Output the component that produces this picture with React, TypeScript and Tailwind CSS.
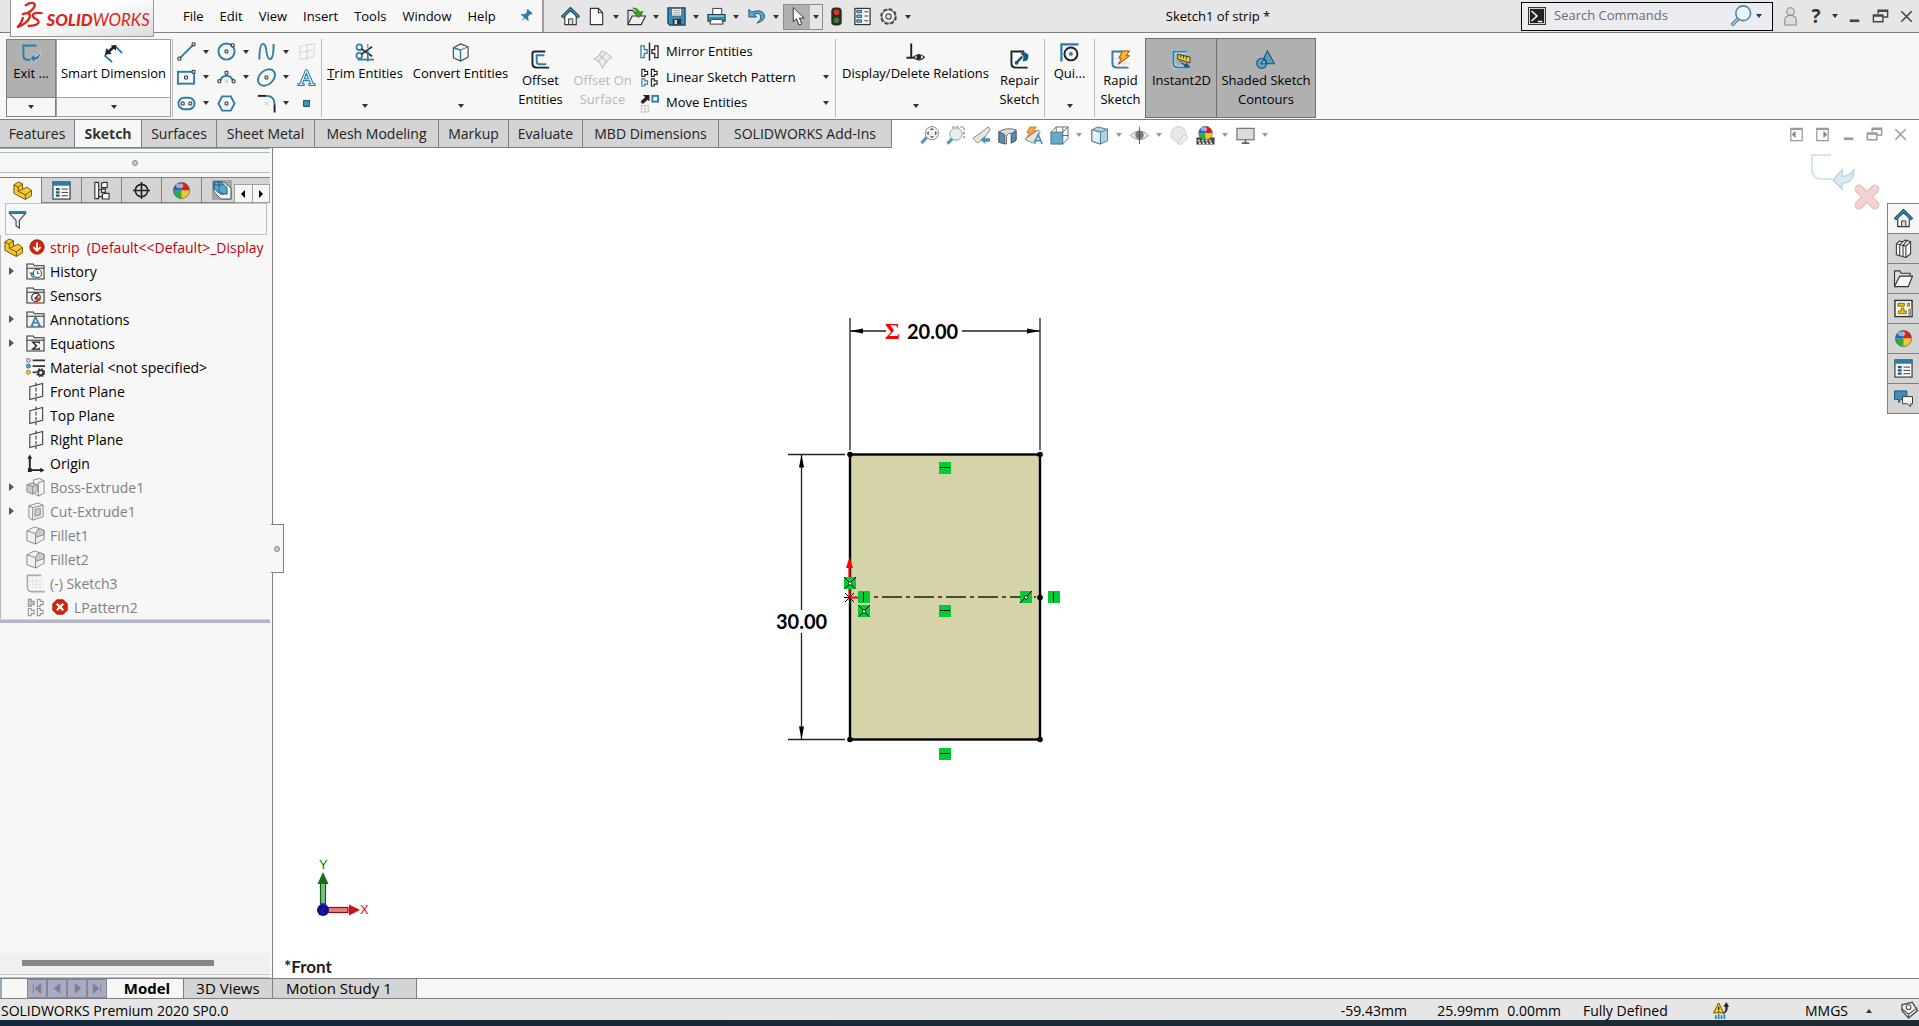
import React from 'react';
import clsx from 'clsx';

const BLUE = '#2b7ea6';
const DARK = '#333333';

const ball = (
  <>
    <path d="M10 10V1.500A8.500 8.500 0 0 1 18.500 10z" fill="#d92020" />
    <path d="M10 10H18.500A8.500 8.500 0 0 1 10 18.500z" fill="#f0c830" />
    <path d="M10 10V18.500A8.500 8.500 0 0 1 1.500 10z" fill="#2fae3a" />
    <path d="M10 10H1.500A8.500 8.500 0 0 1 10 1.500z" fill="#2560c8" />
    <circle cx="10" cy="10" r="8.500" fill="none" stroke="#444" strokeOpacity="0.600" />
    <ellipse cx="8" cy="5" rx="4" ry="2.500" fill="#fff" opacity="0.500" />
  </>
);

const folder = <path d="M1 18V2H7.500L9 4H19V18zM1 6.500H19" fill="#f2f2f2" stroke={DARK} strokeWidth="1.100" />;

const part = (
  <g stroke="#6b5200" strokeWidth="1" strokeLinejoin="round">
    <path d="M1 4L5.500 1L10 3V8.500L15 6.500L19.500 10V15.500L13 19.500L1 13z" fill="#f5c932" />
    <path d="M1 4L5.500 6.500V11L13 14.500V19.500M5.500 6.500L10 3M13 14.500L19.500 10M5.500 11L10 8.500" fill="none" />
  </g>
);

const table = (
  <>
    <rect x="1" y="1" width="18" height="18" fill="#fff" stroke={DARK} strokeWidth="1.200" />
    <rect x="0.500" y="0.500" width="19" height="4.500" fill={BLUE} />
    <path d="M4 8.500H8M4 12H8M4 15.500H8" stroke="#15597c" strokeWidth="2.400" />
    <path d="M10 8.500H17M10 12H17M10 15.500H17" stroke={DARK} />
  </>
);

const home = (
  <>
    <path d="M4 9V18.500H16V9L10 4z" fill="#fff" stroke={DARK} strokeWidth="1.200" />
    <path d="M8 18V12.500H12.500V18" fill="#ddd" stroke={DARK} />
    <path d="M1 11L10 2L19 11" fill="none" stroke="#0f4a68" strokeWidth="3.400" />
    <path d="M1.500 10.500L10 2.200L18.500 10.500" fill="none" stroke="#3f97bd" strokeWidth="1.300" />
  </>
);

const fillet = (
  <g stroke="#888" strokeLinejoin="round">
    <path d="M1 5L9 1L19 4.500V14L10 19L1 15.500z" fill="#f1f1f1" />
    <path d="M1 5L10 8V19" fill="none" />
    <path d="M10 8Q12 3 15 3L19 5V9L10 12z" fill="#ccc" />
  </g>
);

const restore = (color: string) => (
  <path d="M7.500 7V3.500H17.500V10.500H13M2.500 8.500H12.500V15.500H2.500zM7 4.500H18M2 9.500H13" fill="none" stroke={color} strokeWidth="1.500" />
);

const icons: Record<string, React.ReactNode> = {
  home,
  ball,
  part,
  table,
  fillet,
  pin: (
    <g transform="rotate(40 10 10)" fill={BLUE}>
      <path d="M6 2H14V4L12.500 5V9L16 12V13H4V12L7.500 9V5L6 4z" />
      <path d="M9.300 13H10.700L10 19z" />
    </g>
  ),
  newDoc: <path d="M3.500 1.500H12L16.500 6V18.500H3.500zM12 1.500V6H16.500" fill="#fafafa" stroke={DARK} strokeWidth="1.200" />,
  open: (
    <>
      <path d="M1 18V3.500H6L8 6H15V9" fill="#ddd" stroke={DARK} strokeWidth="1.200" />
      <path d="M1 18.500L5.500 9.500H19.500L15 18.500z" fill="#eee" stroke={DARK} strokeWidth="1.200" />
      <path d="M6 1Q12 1 13 5H17L12 11.500L7.500 6H10Q10 3 6 1z" fill="#3fa015" stroke="#1f6a08" strokeWidth="0.600" />
    </>
  ),
  save: (
    <>
      <path d="M1 1H19V19H3L1 17z" fill="#3b8fb8" stroke="#0f3f5c" strokeWidth="1.300" />
      <rect x="5" y="1.500" width="10.500" height="8" fill="#fafafa" stroke="#555" strokeWidth="0.800" />
      <path d="M6.500 3.500H14M6.500 5.500H14M6.500 7.500H14" stroke="#888" strokeWidth="0.800" />
      <rect x="6" y="12.500" width="9" height="6" fill="#333" />
      <rect x="8" y="13.500" width="2.500" height="4.500" fill="#ddd" />
    </>
  ),
  print: (
    <>
      <path d="M6 8V1.500H15.500V8" fill="#fff" stroke={DARK} />
      <path d="M1 8H19V15H1z" fill="#3b8fb8" stroke="#0f3f5c" strokeWidth="1.200" />
      <path d="M2 9.500H18" stroke="#9bd0e6" strokeWidth="1.500" />
      <path d="M4.500 13H15.500L17 18H3z" fill="#fff" stroke={DARK} />
    </>
  ),
  undo: <path d="M2 2.500V10.500H10L7.500 7.500Q13 5.500 14.500 9.500Q15.500 13 10.500 17Q19 14.500 18.500 8.500Q15.500 1.500 5 5.300z" fill="#5ba8cc" stroke="#15597c" />,
  cursor: <path d="M5.500 0.500V15.500L9 12.500L11.500 19L14.500 17.800L12 11.700H17z" fill="#fff" stroke="#333" />,
  traffic: (
    <>
      <rect x="4.500" y="0.500" width="11" height="19" rx="4" fill="#2b2b2b" />
      <circle cx="10" cy="5.500" r="3" fill="#e03418" />
      <circle cx="10" cy="14" r="3" fill="#2f8a20" />
    </>
  ),
  options: (
    <>
      <rect x="2" y="1.500" width="16" height="17" fill="#f5f5f5" stroke={DARK} strokeWidth="1.300" />
      <path d="M12 5H16M12 9.500H16M12 14.500H16" stroke={DARK} />
      <path d="M4 3.500H9V6H4zM4 8.500H9V11H4zM4 13.500H9V16H4z" fill="#7fc0dc" stroke="#15597c" />
    </>
  ),
  gear: (
    <>
      <circle cx="10" cy="10" r="7.500" fill="none" stroke="#444" strokeWidth="2.500" strokeDasharray="3.900 1.990" />
      <circle cx="10" cy="10" r="7" fill="#eee" stroke="#444" />
      <circle cx="10" cy="10" r="2.800" fill="#e6e6e6" stroke="#444" strokeWidth="1.200" />
    </>
  ),
  prompt: (
    <>
      <rect x="0.500" y="0.500" width="19" height="19" fill="#fff" stroke="#222" />
      <rect x="2" y="2" width="16" height="16" fill="#222" />
      <path d="M4 4.500L10 10L4 15.500M11 16H16" fill="none" stroke="#fff" strokeWidth="1.700" />
    </>
  ),
  search: (
    <>
      <path d="M8 12L1.500 18.500" stroke="#4c7fa0" strokeWidth="3.200" />
      <path d="M8 12L2 18" stroke="#cfe6f2" strokeWidth="1" />
      <circle cx="12" cy="7.500" r="6.700" fill="#eef6fa" stroke="#4f87aa" strokeWidth="1.500" />
    </>
  ),
  user: (
    <g fill="#ddd" stroke="#888" strokeWidth="1.100">
      <path d="M4 19V13.500Q4 9 10 9Q16 9 16 13.500V19z" />
      <circle cx="10" cy="4.800" r="4" />
    </g>
  ),
  minimize: <path d="M5 14.500H15" stroke="#444" strokeWidth="2.800" />,
  restore: restore('#444'),
  close: <path d="M4.500 4.500L15.500 15.500M15.500 4.500L4.500 15.500" stroke="#444" strokeWidth="1.700" />,
  minimizeLight: <path d="M5 14.500H15" stroke="#999" strokeWidth="2.800" />,
  restoreLight: restore('#999'),
  closeLight: <path d="M4.500 4.500L15.500 15.500M15.500 4.500L4.500 15.500" stroke="#999" strokeWidth="1.500" />,
  paneLeft: (
    <>
      <path d="M4 3.500H16V16.500H4zM4 4.500H16" fill="none" stroke="#999" strokeWidth="1.300" />
      <path d="M9 6V14L5 10z" fill="#888" />
    </>
  ),
  paneRight: (
    <>
      <path d="M4 3.500H16V16.500H4zM4 4.500H16" fill="none" stroke="#999" strokeWidth="1.300" />
      <path d="M11 6V14L15 10z" fill="#888" />
    </>
  ),
  exitSketch: (
    <>
      <path d="M15.500 1.500H1.500V12Q1.500 16.500 6 16.500H9" fill="none" stroke={BLUE} strokeWidth="2" />
      <path d="M19.500 8Q19.500 17 13.500 17V20L8.500 15L13.500 10V13.500Q17 13 19.500 8z" fill={BLUE} stroke="#e8f2f8" strokeWidth="0.600" />
    </>
  ),
  smartDim: (
    <>
      <path d="M3 10L1 12.500L8.500 19M11.500 2L19 9.500" fill="none" stroke={BLUE} strokeWidth="2" />
      <path d="M1 11L2.500 4.500L4.500 6.500L8.500 3L7 1.500L13 1L12.500 7L10.500 5L6.500 8.500L8 10.500z" fill="#222" />
    </>
  ),
  line: (
    <>
      <path d="M3 17L17 3" stroke={BLUE} strokeWidth="2" />
      <path d="M1 16h3v3h-3zM16 1h3v3h-3z" fill="#fff" stroke="#222" />
    </>
  ),
  circle: (
    <>
      <circle cx="10" cy="10" r="8.500" fill="none" stroke={BLUE} strokeWidth="2" />
      <path d="M8.500 8.500h3v3h-3zM15 2h3v3h-3z" fill="#fff" stroke="#222" />
    </>
  ),
  spline: <path d="M2.500 18.500Q2.500 2 6.500 2Q9 2 10 10Q11 18 13.500 18Q17.500 18 17.500 2" fill="none" stroke={BLUE} strokeWidth="2" />,
  plane: <path d="M3 5L18 1.500V15L3 18.500zM10.500 2V19M3 11.500L18 8" fill="none" stroke="#c4c4c4" strokeDasharray="2 1" />,
  rectangle: (
    <>
      <rect x="1" y="4" width="17" height="12.500" fill="none" stroke={BLUE} strokeWidth="2" />
      <path d="M8 8.500h3v3h-3zM16 2.500h3v3h-3z" fill="#fff" stroke="#222" />
    </>
  ),
  arc: (
    <>
      <path d="M3 14A7.500 9 0 0 1 17 14" fill="none" stroke={BLUE} strokeWidth="2" />
      <path d="M1 12.500h3v3h-3zM16 12.500h3v3h-3zM8.500 3.500h3v3h-3z" fill="#fff" stroke="#222" />
      <path d="M8 12l4 4M12 12l-4 4" stroke="#bbb" />
    </>
  ),
  ellipse: (
    <>
      <ellipse cx="10" cy="10" rx="10" ry="7.300" transform="rotate(-42 10 10)" fill="none" stroke={BLUE} strokeWidth="2" />
      <path d="M8.500 8.500h3v3h-3z" fill="#fff" stroke="#222" />
    </>
  ),
  text: (
    <path
      d="M1 18.500V16.500H2.800L9 2H11L17.200 16.500H19V18.500H12.500V16.500H14.200L12.900 13.300H7L5.700 16.500H7.500V18.500zM7.700 11.300H12L9.900 5.800z"
      fill="#dcecf4"
      stroke={BLUE}
      strokeWidth="1.100"
    />
  ),
  slot: (
    <>
      <rect x="1.500" y="4" width="17" height="12" rx="6" fill="none" stroke={BLUE} strokeWidth="2" />
      <path d="M4.500 8.500h3v3h-3zM12.500 8.500h3v3h-3z" fill="#fff" stroke="#222" />
    </>
  ),
  polygon: (
    <>
      <path d="M5.500 2.500H14.500L18.500 10L14.500 17.500H5.500L1.500 10z" fill="none" stroke={BLUE} strokeWidth="2" />
      <path d="M8.500 8.500h3v3h-3z" fill="#fff" stroke="#222" />
    </>
  ),
  filletSketch: (
    <>
      <path d="M1 2H10" stroke="#222" strokeWidth="2" />
      <path d="M10 2Q18.500 2 18.500 11" fill="none" stroke={BLUE} strokeWidth="2" />
      <path d="M18.500 11V19.500" stroke="#222" strokeWidth="2" />
      <path d="M8 8l4 4M12 8l-4 4" stroke="#bbb" />
    </>
  ),
  point: <rect x="7" y="7" width="6" height="6" fill="#3f97bd" stroke="#0f3f5c" />,
  trim: (
    <>
      <circle cx="4.500" cy="4.500" r="3" fill="none" stroke={BLUE} strokeWidth="1.800" />
      <circle cx="4.500" cy="13.500" r="3" fill="none" stroke={BLUE} strokeWidth="1.800" />
      <path d="M6.500 6L18 14M6.500 12L18 4" stroke="#333" strokeWidth="1.800" />
      <path d="M13.500 8V19.500M3 17.500H20" stroke={BLUE} strokeWidth="1.800" />
      <path d="M13.500 1V5" stroke="#555" />
    </>
  ),
  convert: (
    <>
      <path d="M2.500 5L10 1L18 4V15L10 19L2.500 15.500z" fill="#f4f4f4" stroke="#444" strokeWidth="1.200" />
      <path d="M10 7.500V19M10 7.500L18 4" stroke="#666" fill="none" />
      <path d="M2.500 5L10 7.500V18.500" fill="none" stroke={BLUE} strokeWidth="1.500" />
    </>
  ),
  offset: (
    <>
      <path d="M15 1.500H4Q1.500 1.500 1.500 4V14Q1.500 18.500 6 18.500H19" fill="none" stroke="#222" strokeWidth="2" />
      <path d="M14 5.500H6V12Q6 15 9 15H16" fill="none" stroke={BLUE} strokeWidth="2" />
    </>
  ),
  offsetSurface: <path d="M1 9.500Q7 7 9 1Q15 2.500 19.500 8Q15 10 10 19Q8 12.500 1 9.500zM5 12Q10 9 13 3.500M7.500 6L14 12" fill="#ededed" stroke="#c2c2c2" strokeWidth="1.200" />,
  mirror: (
    <>
      <path d="M1 4H4.500V8H7.500V12H4.500V16.500H1z" fill="none" stroke={BLUE} strokeWidth="1.300" />
      <path d="M19 4H15.500V8H12.500V12H15.500V16.500H19z" fill="none" stroke="#222" strokeWidth="1.300" />
      <path d="M10 0.500V19.500" stroke="#222" strokeWidth="1.500" />
    </>
  ),
  linear: (
    <g fill="none" strokeWidth="1.200">
      <path d="M2 1.500h3v2h3v3.500h-3v2h-3zM12 1.500h3v2h3v3.500h-3v2h-3zM12 11.500h3v2h3v3.500h-3v2h-3z" stroke="#222" />
      <path d="M2 11.500h3v2h3v3.500h-3v2h-3z" stroke={BLUE} />
    </g>
  ),
  move: (
    <>
      <path d="M3 1H10V8L8 6L3 10.500L0.500 8L5.500 3.500z" fill="#222" />
      <rect x="13" y="2" width="6" height="6" fill="#fff" stroke={BLUE} strokeWidth="2" />
      <path d="M1.500 12.500H9V19H1.500zM5.500 12V19" fill="none" stroke="#bbb" strokeDasharray="2 1" strokeWidth="1.300" />
    </>
  ),
  relations: (
    <>
      <path d="M5.500 0.500V15M0.500 15.500H9" stroke="#222" strokeWidth="2" />
      <path d="M8 15Q13.500 9.500 19.500 15Q13.500 20.500 8 15z" fill="#fff" stroke="#333" strokeWidth="1.200" />
      <circle cx="13.500" cy="14.800" r="2.500" fill="#222" />
    </>
  ),
  repair: (
    <>
      <path d="M15 1.500H1.500V14Q1.500 18.500 6 18.500H18.500" fill="none" stroke="#222" strokeWidth="2" />
      <path d="M6 14L13 7M12 4.500Q15 2.500 17.500 5L15 6L15.500 8L18 7.500Q18 11 13.500 10.500" fill="none" stroke="#15597c" strokeWidth="2.600" />
      <circle cx="7" cy="13.500" r="2" fill="#15597c" />
    </>
  ),
  quick: (
    <>
      <path d="M1.500 19.500V1.500H19.500" fill="none" stroke={BLUE} strokeWidth="2.400" />
      <circle cx="11.500" cy="11.500" r="6.800" fill="none" stroke="#222" strokeWidth="2" />
      <circle cx="11.500" cy="11.500" r="2" fill={BLUE} />
    </>
  ),
  rapid: (
    <>
      <path d="M8 1V20M14 1V20M1 9H20M1 14H20" stroke="#ddd" />
      <path d="M12 1.500H1.500V14Q1.500 18.500 6 18.500H18.500" fill="none" stroke={BLUE} strokeWidth="2" />
      <path d="M12 1H19.500L16 6H19.500L8 15L11 8.500H8.500z" fill="#f9b81f" stroke="#a33c10" />
    </>
  ),
  instant: (
    <>
      <path d="M16 1.500H1.500V14Q1.500 18.500 6 18.500H19" fill="none" stroke="#e8f2f8" strokeWidth="3.600" />
      <path d="M16 1.500H1.500V14Q1.500 18.500 6 18.500H19" fill="none" stroke={BLUE} strokeWidth="2.200" />
      <path d="M6 4.500L19 7.500V13.500L6 9.500z" fill="#f7cc34" stroke="#333" />
      <path d="M9 5.500V8M12 6V9M15 7V10" stroke="#333" />
      <path d="M6 10.500L14 15L15 13L19 18L12.500 18L13 16.500z" fill="#15597c" />
    </>
  ),
  shaded: (
    <g stroke="#15597c" strokeWidth="1.200">
      <path d="M12 1L19.500 14.500H5.500z" fill="#5a9fc0" />
      <circle cx="6" cy="14" r="5.300" fill="#5a9fc0" fillOpacity="0.900" />
      <path d="M5.500 14.500H11L8.500 9.500z" fill="#9ccbe0" />
    </g>
  ),
  zoomFit: (
    <>
      <path d="M7 12L1.500 18" stroke="#5b94b4" strokeWidth="3.200" />
      <circle cx="12.500" cy="7.500" r="7" fill="#f0f0f0" stroke="#888" />
      <path d="M12.500 2l2.200 2.200h-4.400zM12.500 13l2.200-2.200h-4.400zM7 7.500l2.200-2.200v4.400zM18 7.500l-2.200-2.200v4.400z" fill="#555" />
    </>
  ),
  zoomArea: (
    <>
      <path d="M6 1H19V13" fill="none" stroke="#777" strokeDasharray="3 1.500" strokeWidth="1.200" />
      <path d="M7 13L1.500 18.500" stroke="#5b94b4" strokeWidth="3.200" />
      <circle cx="10.500" cy="8.500" r="6.500" fill="#e9eef0" stroke="#999" />
    </>
  ),
  prevView: (
    <>
      <path d="M1 13L12 5L17 1L19 4L15 10L6 18z" fill="#e3e3e3" stroke="#888" />
      <path d="M9 14.500L14 10.500V13H19V16.500H14V19z" fill="#4a93b8" />
    </>
  ),
  section: (
    <>
      <path d="M1 6Q9 1 19 4V15L14 18V8Q10 7 9 11V19L1 17z" fill="#dcdcdc" stroke="#666" />
      <path d="M1 6L7 9V19L1 17zM14 8L19 5V15L14 18z" fill="#4a93b8" stroke="#555" />
    </>
  ),
  viewStyle: (
    <>
      <path d="M1 14L9 8L15 4L17 7L9 18z" fill="#e3e3e3" stroke="#888" />
      <path d="M6 1H13L10 5H13L3 12L6 7H3z" fill="#f5a63a" stroke="#b86b28" strokeWidth="0.800" />
      <path d="M11 19L15 9L19 19M12.500 15.500H17.500" fill="none" stroke="#4a93b8" strokeWidth="1.800" />
    </>
  ),
  orientation: (
    <>
      <path d="M6.500 1H19V13M1 6.500L6.500 1M13.500 6.500L19 1M13.500 19L19 13M6.500 1V6.500M13.500 1V6M13.500 10H19" fill="none" stroke="#666" />
      <rect x="1" y="6.500" width="12.500" height="12.500" fill="#6ba9c7" stroke="#3a7390" />
    </>
  ),
  displayStyle: (
    <g stroke="#5a7482" strokeLinejoin="round">
      <path d="M2 4L8 1L18.500 3.500V15.500L11 19L2 16z" fill="#a9d4e6" />
      <path d="M2 4L11 6.500V19M11 6.500L18.500 3.500" fill="none" />
      <path d="M2 4L11 6.500V19L2 16z" fill="#e2f0f6" />
    </g>
  ),
  hideShow: (
    <>
      <path d="M0.500 10Q10 0 19.500 10Q10 19 0.500 10z" fill="#eaeaea" stroke="#999" />
      <circle cx="10" cy="9.500" r="4.500" fill="#777" />
      <path d="M10 1V19" stroke="#555" />
    </>
  ),
  appearance: (
    <>
      <circle cx="9" cy="8.500" r="8" fill="#e8e8e8" stroke="#d0d0d0" />
      <path d="M8 17L15 9L19 12L12 19H8z" fill="#ededed" stroke="#c4c4c4" />
    </>
  ),
  scene: (
    <>
      <path d="M0.500 12H19.500V19.500H0.500z" fill="#444" />
      <path d="M2 15.500H18M3 18H17" stroke="#eee" strokeWidth="1.800" strokeDasharray="2 2" />
      <g transform="translate(1.500 -1) scale(0.850)">{ball}</g>
    </>
  ),
  monitor: (
    <>
      <rect x="1" y="2.500" width="18" height="12" fill="#d8dcde" stroke="#777" strokeWidth="1.300" />
      <path d="M10 14V18M6 18H14" stroke="#666" strokeWidth="1.800" />
    </>
  ),
  config: (
    <g fill="#fafafa" stroke={DARK} strokeWidth="1.200">
      <path d="M5 2V16.500H12M5 9H12" fill="none" />
      <path d="M3 1.500h4v17h-4zM10 2.500L12 1.500H16V7H10zM10 8.500h4v3.500h-4zM11 14L13 13H18V19H11z" />
    </g>
  ),
  target: (
    <>
      <circle cx="10" cy="10" r="6.500" fill="none" stroke="#222" strokeWidth="1.700" />
      <path d="M10 1V19M1 10H19" stroke="#222" strokeWidth="1.700" />
    </>
  ),
  cam: (
    <>
      <rect width="20" height="20" fill="#a5a5a9" />
      <path d="M2 2H12L19 8V19H9L2 12z" fill="#f4f4f4" stroke="#555" />
      <path d="M2 2H9L15 7.500V14H8L2 8.500z" fill="#5ba8cc" stroke="#15597c" />
      <path d="M2 5H11M7 2V11L12 15" fill="none" stroke="#15597c" strokeWidth="0.800" />
    </>
  ),
  funnel: (
    <>
      <path d="M1.500 3.500H18.500L12 11V19L8.500 16.500V11z" fill="#f2f2f2" stroke="#444" strokeWidth="1.200" />
      <path d="M1 2.500H19" stroke={BLUE} strokeWidth="3" />
    </>
  ),
  errorDown: (
    <>
      <circle cx="10" cy="10" r="9" fill="#d92408" stroke="#7c1204" />
      <path d="M10 4.500V14M5.500 10L10 14.500L14.500 10" fill="none" stroke="#fff" strokeWidth="2.400" />
    </>
  ),
  errorCross: (
    <>
      <path d="M6 1H14L19 6V14L14 19H6L1 14V6z" fill="#d92408" stroke="#7c1204" />
      <path d="M6 6L14 14M14 6L6 14" stroke="#fff" strokeWidth="2.800" />
    </>
  ),
  history: (
    <>
      {folder}
      <circle cx="12" cy="12" r="4.300" fill="#fff" stroke="#333" />
      <path d="M12 9.500V12H14" fill="none" stroke="#333" />
      <path d="M3.500 11H9L6.500 14Q8 16.500 11 17Q6 18 5 13.500z" fill={BLUE} />
    </>
  ),
  sensors: (
    <>
      {folder}
      <circle cx="10.500" cy="12" r="4.500" fill="#fff" stroke="#333" strokeWidth="1.300" />
      <path d="M10.500 12L15 12A4.500 4.500 0 0 1 10.500 16.500z" fill="#e0401c" />
      <path d="M9 14L13 9.500" stroke="#222" strokeWidth="1.300" />
    </>
  ),
  annotations: (
    <>
      {folder}
      <path d="M6 16.500L10 7.500L14.500 16.500M7.500 13.500H13M5 16.500H8M12.500 16.500H16" fill="none" stroke={BLUE} strokeWidth="1.600" />
    </>
  ),
  equations: (
    <>
      {folder}
      <path d="M14 10V8.500H7L11 12.300L7 16H14V14.500" fill="none" stroke="#222" strokeWidth="1.400" />
    </>
  ),
  material: (
    <>
      <path d="M7 2.500H20M7 8.500H20M7 15H11" stroke="#333" strokeWidth="1.800" />
      <circle cx="2.500" cy="2.500" r="2.100" fill="#ddd" stroke="#555" strokeWidth="0.800" />
      <circle cx="2.500" cy="8.500" r="2.100" fill="#5ba8cc" stroke="#15597c" strokeWidth="0.800" />
      <circle cx="2.500" cy="15" r="2.100" fill="#f5c932" stroke="#8a6a00" strokeWidth="0.800" />
      <circle cx="15.500" cy="15.500" r="2.700" fill="none" stroke="#333" strokeWidth="2" />
      <circle cx="15.500" cy="15.500" r="4" fill="none" stroke="#333" strokeWidth="1.500" strokeDasharray="1.800 1.340" />
    </>
  ),
  refPlane: (
    <>
      <path d="M4 5L17.500 1.500V15L4 18.500z" fill="none" stroke="#444" strokeWidth="1.200" />
      <path d="M10.500 0.500V20" stroke="#444" strokeWidth="1.200" strokeDasharray="4 1.500" />
    </>
  ),
  origin: (
    <>
      <path d="M4 4V17H16" fill="none" stroke="#222" strokeWidth="2" />
      <path d="M1.500 5L4 0.500L6.500 5zM15 14.500L19.500 17L15 19.500zM2 15h4v4h-4z" fill="#222" />
    </>
  ),
  boss: (
    <g stroke="#888" strokeLinejoin="round">
      <path d="M8 2L14 0.500L19 3V16L13 19L8 16z" fill="#f4f4f4" />
      <path d="M13 19V5L19 3" fill="none" />
      <path d="M1 7L6 5L12 7V14L7 17L1 14.500z" fill="#ccc" />
      <path d="M1 7L7 9V17M7 9L12 7" fill="none" />
    </g>
  ),
  cut: (
    <g stroke="#888" strokeLinejoin="round">
      <path d="M3 4L13 1L18 3.500V15.500L7 19L3 16.500z" fill="#f1f1f1" />
      <path d="M7 6V19M7 6L18 3.500M3 4L7 6" fill="none" />
      <path d="M9.500 8L15 6.500V13.500L9.500 15z" fill="#ccc" />
    </g>
  ),
  sketch: (
    <>
      <path d="M7 4V17M11 4V17M15 4V17M4 7H19M4 11H19M4 14H19" stroke="#e0e0e0" strokeWidth="0.800" />
      <path d="M16 1.500H1.500V13.500Q1.500 18.500 6 18.500H20" fill="none" stroke="#aaa" strokeWidth="1.700" />
    </>
  ),
  lpattern: (
    <g fill="none" stroke="#999" strokeWidth="1.200">
      <path d="M2.500 1.500h3v2h3v3.500h-3v2h-3z" fill="#c8c8c8" />
      <path d="M12 1.500h3v2h3v3.500h-3v2h-3zM2.500 11h3v2h3v3.500h-3v2h-3zM12 11h3v2h3v3.500h-3v2h-3z" />
    </g>
  ),
  library: (
    <g fill="#fafafa" stroke="#333" strokeWidth="1.100" strokeLinejoin="round">
      <path d="M2.500 5L5.500 2L9 3L12 1L17.500 3V15.500L12.500 19.500L2.500 16.500z" />
      <path d="M2.500 5L12.500 7.500V19.500M12.500 7.500L17.500 3M6 6V17M9.500 7V18M6 6L9 3M9.500 7L13.500 2" fill="none" />
    </g>
  ),
  explorer: (
    <g stroke="#333" strokeWidth="1.200">
      <path d="M0.500 18.500V2H6L7.500 4.500H17V7" fill="#ddd" />
      <path d="M0.500 18.500L6 7.500H19.500L15 18.500z" fill="#f5f5f5" />
    </g>
  ),
  palette: (
    <>
      <rect x="1" y="1.500" width="18" height="17" fill="#fff" stroke="#333" strokeWidth="1.500" />
      <path d="M4 4.500H11V7.500H4zM14 4.500H16.500V7.500H14zM7.500 9.500H10.500V12.500H13V15.500H4.500V12.500H7.500z" fill="#f5c000" stroke="#6b5200" strokeWidth="0.800" />
      <path d="M15 10H19V18H15z" fill="#999" />
    </>
  ),
  forum: (
    <>
      <path d="M0.500 2H13.500V11H7L5 14.500V11H0.500z" fill="#3f8fb4" stroke="#15597c" />
      <path d="M9 8H19.500V15.500H17.500V18.500L14 15.500H9z" fill="#fafafa" stroke="#333" />
    </>
  ),
  rebuild: (
    <>
      <path d="M4 15V19M7 14V19M10 15V19M13 14V19" stroke={BLUE} strokeWidth="1.800" />
      <path d="M7 2L12.500 12.500H1.500z" fill="#f9c41c" stroke="#6b5200" />
      <path d="M7 6V9.500M7 10.500V11.500" stroke="#222" strokeWidth="1.400" />
      <path d="M10 14Q15 12 14 6H12L15 1L18 6H16.500Q17 13 10 14z" fill="#222" />
    </>
  ),
  tag: (
    <>
      <path d="M2 4L13 1.500L18.500 10L9 18L2 10z" fill="#f2f2f2" stroke="#555" strokeWidth="1.500" />
      <path d="M9 18V14L18.500 7M2 8L9 14" fill="none" stroke="#555" strokeWidth="1.200" />
      <circle cx="9" cy="6.500" r="2.500" fill="#fff" stroke="#555" strokeWidth="1.200" />
    </>
  ),
};

interface IconProps {
  name: string;
  className?: string;
}

const Icon: React.FC<IconProps> = ({ name, className = 'w-5 h-5' }) => (
  <svg viewBox="0 0 20 20" className={clsx('shrink-0', className)} aria-hidden="true">
    {icons[name]}
  </svg>
);

const Caret: React.FC<{ label: string; light?: boolean; className?: string }> = ({ label, light, className = 'w-[14px]' }) => (
  <button type="button" aria-label={label} className={clsx('shrink-0 flex items-center justify-center', className)}>
    <svg viewBox="0 0 6 4" className={clsx('w-[6px] h-1', light ? 'fill-[#999]' : 'fill-[#333]')}>
      <path d="M0 0H6L3 4z" />
    </svg>
  </button>
);

const IconButton: React.FC<{ icon: string; label: string; className?: string }> = ({ icon, label, className }) => (
  <button type="button" aria-label={label} className={clsx('w-[26px] shrink-0 flex items-center justify-center', className)}>
    <Icon name={icon} className="w-[19px] h-[19px]" />
  </button>
);

const menus = ['File', 'Edit', 'View', 'Insert', 'Tools', 'Window', 'Help'];

const Logo = () => (
  <div className="relative z-10 w-[144px] h-[37px] shrink-0 border border-t-0 border-[#999] bg-linear-to-br from-white from-40% to-[#dcdcdc] flex items-center">
    <svg viewBox="0 0 144 36" className="w-full h-full" role="img" aria-label="SOLIDWORKS">
      <g fill="none" stroke="#d9261c" strokeWidth="2.400" strokeLinecap="round" strokeLinejoin="round">
        <path d="M15 5Q22 1 24 4Q25 8 17 13" />
        <path d="M12 14Q20 11 19 17Q17 23 7 27Q11 23 12 18" />
        <path d="M31 13Q23 12 22 15Q22 18 27 20Q30 23 25 25Q22 26 18 26" />
      </g>
      <text x="36" y="26" fill="#d9261c" className="font-[Lato] text-[17px] italic">
        <tspan className="font-black">SOLID</tspan>
        <tspan>WORKS</tspan>
      </text>
    </svg>
  </div>
);

const TitleBar = () => (
  <header className="h-[33px] shrink-0 flex bg-[#e6e6e6] border-b border-[#808080]">
    <div className="w-[544px] shrink-0 flex pl-[10px] pr-2 border-r-2 border-[#a0a0a0] bg-linear-to-r from-[#e6e6e6] from-[10px] to-[#f7f7f7] to-[10px]">
      <Logo />
      <nav className="flex items-center gap-4 h-[34px] pl-[29px] whitespace-nowrap">
        {menus.map((menu) => (
          <button key={menu} type="button">
            {menu}
          </button>
        ))}
      </nav>
      <button type="button" aria-label="Pin menu" className="ml-auto self-center">
        <Icon name="pin" className="w-4 h-4" />
      </button>
    </div>
    <div className="flex items-center pl-[13px] pt-px">
      <IconButton icon="home" label="Home" />
      {[
        ['newDoc', 'New'],
        ['open', 'Open'],
        ['save', 'Save'],
        ['print', 'Print'],
        ['undo', 'Undo'],
      ].map(([icon, label]) => (
        <React.Fragment key={icon}>
          <IconButton icon={icon} label={label} />
          <Caret label={`${label} options`} />
        </React.Fragment>
      ))}
      <div className="flex border border-[#8c8c8c] w-10 h-[26px]">
        <IconButton icon="cursor" label="Select" className="bg-[#b0b0b0]" />
        <Caret label="Select options" className="w-3" />
      </div>
      <IconButton icon="traffic" label="Rebuild" />
      <IconButton icon="options" label="File properties" />
      <IconButton icon="gear" label="Options" />
      <Caret label="More options" />
    </div>
    <div className="flex-1 h-[34px] flex items-center justify-center whitespace-nowrap">Sketch1 of strip *</div>
    <div className="flex items-center">
      <div className="w-[252px] h-[29px] flex items-center border border-black bg-[#ebecf1] px-[6px]">
        <Icon name="prompt" className="w-[18px] h-[18px]" />
        <input
          type="text"
          aria-label="Search Commands"
          placeholder="Search Commands"
          className="flex-1 min-w-0 ml-2 bg-transparent outline-none placeholder:text-[#6b6b6b]"
        />
        <button type="button" aria-label="Search">
          <Icon name="search" className="w-[22px] h-[22px]" />
        </button>
        <Caret label="Search scope" />
      </div>
      <IconButton icon="user" label="Account" className="ml-1" />
      <button type="button" aria-label="Help" className="w-[26px] text-[19px] font-bold text-[#333]">
        ?
      </button>
      <Caret label="Help options" className="w-3" />
      <IconButton icon="minimize" label="Minimize" />
      <IconButton icon="restore" label="Restore" />
      <IconButton icon="close" label="Close" />
    </div>
  </header>
);

interface RibbonButtonProps {
  icon: string;
  lines: string[];
  className: string;
  caret?: boolean;
  disabled?: boolean;
}

const RibbonButton: React.FC<RibbonButtonProps> = ({ icon, lines, className, caret, disabled }) => (
  <div className={clsx('shrink-0 flex flex-col items-center', className)}>
    <button
      type="button"
      disabled={disabled}
      className={clsx('flex flex-col items-center leading-[19px] whitespace-nowrap', caret ? 'pt-1' : 'pt-[11px]', disabled && 'text-[#b8b8b8]')}
    >
      <Icon name={icon} className="w-[19px] h-[19px] mb-[2px]" />
      {lines.map((line) => (
        <span key={line}>{line}</span>
      ))}
    </button>
    {caret && <Caret label={`${lines[0]} options`} className="mt-auto h-[22px] w-[14px]" />}
  </div>
);

const Separator = () => <div className="w-px shrink-0 bg-[#bdbdbd]" />;

const sketchTools = [
  ['line', 'circle', 'spline', 'plane'],
  ['rectangle', 'arc', 'ellipse', 'text'],
  ['slot', 'polygon', 'filletSketch', 'point'],
];

const entityTools = [
  { icon: 'mirror', label: 'Mirror Entities', caret: false },
  { icon: 'linear', label: 'Linear Sketch Pattern', caret: true },
  { icon: 'move', label: 'Move Entities', caret: true },
];

const Ribbon = () => (
  <section className="h-[87px] shrink-0 flex pt-[6px] pb-[2px] pl-[6px] bg-[#f7f7f7] border-b border-[#808080]">
    <div className="w-[50px] shrink-0 flex flex-col border border-[#808080]">
      <button type="button" className="h-[58px] flex flex-col items-center pt-1 leading-[19px] bg-[#b0b0b0] border-b border-[#808080]">
        <Icon name="exitSketch" className="w-[19px] h-[19px] mb-px" />
        Exit ...
      </button>
      <Caret label="Exit Sketch options" className="self-center flex-1" />
    </div>
    <div className="w-[115px] shrink-0 flex flex-col border border-[#a0a0a0]">
      <button type="button" className="h-[58px] flex flex-col items-center pt-1 leading-[19px] bg-white border-b border-[#a0a0a0] whitespace-nowrap">
        <Icon name="smartDim" className="w-[19px] h-[19px] mb-px" />
        Smart Dimension
      </button>
      <Caret label="Smart Dimension options" className="self-center flex-1" />
    </div>
    <div className="w-px shrink-0" />
    <Separator />
    <div className="w-[148px] shrink-0 grid grid-rows-3 pb-px">
      {sketchTools.map((row) => (
        <div key={row[0]} className="flex items-center">
          {row.map((tool, i) => (
            <div key={tool} className="flex items-center w-10 last:w-[26px]">
              <IconButton icon={tool} label={tool} />
              {i < 3 && tool !== 'polygon' && <Caret label={`${tool} options`} />}
            </div>
          ))}
        </div>
      ))}
    </div>
    <Separator />
    <RibbonButton icon="trim" lines={['Trim Entities']} caret className="w-[86px] [&_span]:first-letter:underline" />
    <RibbonButton icon="convert" lines={['Convert Entities']} caret className="w-[105px]" />
    <RibbonButton icon="offset" lines={['Offset', 'Entities']} className="w-[55px]" />
    <RibbonButton icon="offsetSurface" lines={['Offset On', 'Surface']} disabled className="w-[69px]" />
    <div className="w-[198px] shrink-0 grid grid-rows-3 pl-[3px] pb-px">
      {entityTools.map((tool) => (
        <div key={tool.icon} className="flex items-center justify-between">
          <button type="button" className="flex items-center gap-[7px] whitespace-nowrap">
            <Icon name={tool.icon} className="w-[19px] h-[19px]" />
            {tool.label}
          </button>
          {tool.caret && <Caret label={`${tool.label} options`} className="mr-[2px] w-[14px]" />}
        </div>
      ))}
    </div>
    <Separator />
    <RibbonButton icon="relations" lines={['Display/Delete Relations']} caret className="w-[159px]" />
    <RibbonButton icon="repair" lines={['Repair', 'Sketch']} className="w-[49px]" />
    <Separator />
    <RibbonButton icon="quick" lines={['Qui...']} caret className="w-[49px]" />
    <Separator />
    <RibbonButton icon="rapid" lines={['Rapid', 'Sketch']} className="w-[51px]" />
    <RibbonButton icon="instant" lines={['Instant2D']} className="w-[71px] bg-[#b0b0b0] outline outline-[#707070]" />
    <RibbonButton icon="shaded" lines={['Shaded Sketch', 'Contours']} className="w-[98px] bg-[#b0b0b0] outline outline-[#707070]" />
  </section>
);

const commandTabs = [
  { label: 'Features', width: 'w-[75px]' },
  { label: 'Sketch', width: 'w-[67px]' },
  { label: 'Surfaces', width: 'w-[75px]' },
  { label: 'Sheet Metal', width: 'w-[98px]' },
  { label: 'Mesh Modeling', width: 'w-[124px]' },
  { label: 'Markup', width: 'w-[70px]' },
  { label: 'Evaluate', width: 'w-[74px]' },
  { label: 'MBD Dimensions', width: 'w-[136px]' },
  { label: 'SOLIDWORKS Add-Ins', width: 'w-[173px]' },
];

const viewTools = [
  { icon: 'zoomFit', caret: false },
  { icon: 'zoomArea', caret: false },
  { icon: 'prevView', caret: false },
  { icon: 'section', caret: false },
  { icon: 'viewStyle', caret: false },
  { icon: 'orientation', caret: true },
  { icon: 'displayStyle', caret: true },
  { icon: 'hideShow', caret: true },
  { icon: 'appearance', caret: false },
  { icon: 'scene', caret: true },
  { icon: 'monitor', caret: true },
];

const CommandTabs = () => (
  <div className="h-7 shrink-0 flex items-stretch">
    <div role="tablist" className="flex text-[14px] border-b border-[#808080]">
      {commandTabs.map((tab) => (
        <button
          key={tab.label}
          type="button"
          role="tab"
          aria-selected={tab.label === 'Sketch'}
          className={clsx(
            'shrink-0 border-r border-[#808080] whitespace-nowrap',
            tab.width,
            tab.label === 'Sketch' ? 'bg-[#f7f7f7] font-bold text-[#333]' : 'bg-[#d4d4d4] text-[#222]'
          )}
        >
          {tab.label}
        </button>
      ))}
    </div>
    <div className="flex items-center pl-6 pt-[2px]">
      {viewTools.map((tool) => (
        <React.Fragment key={tool.icon}>
          <IconButton icon={tool.icon} label={tool.icon} />
          {tool.caret && <Caret light label={`${tool.icon} options`} />}
        </React.Fragment>
      ))}
    </div>
    <div className="ml-auto flex items-center pr-[6px] pt-px">
      {['paneLeft', 'paneRight', 'minimizeLight', 'restoreLight', 'closeLight'].map((icon) => (
        <IconButton key={icon} icon={icon} label={icon} />
      ))}
    </div>
  </div>
);

interface TreeNode {
  label: string;
  icon: string;
  expandable?: boolean;
  muted?: boolean;
  error?: boolean;
}

const treeNodes: TreeNode[] = [
  { label: 'History', icon: 'history', expandable: true },
  { label: 'Sensors', icon: 'sensors' },
  { label: 'Annotations', icon: 'annotations', expandable: true },
  { label: 'Equations', icon: 'equations', expandable: true },
  { label: 'Material <not specified>', icon: 'material' },
  { label: 'Front Plane', icon: 'refPlane' },
  { label: 'Top Plane', icon: 'refPlane' },
  { label: 'Right Plane', icon: 'refPlane' },
  { label: 'Origin', icon: 'origin' },
  { label: 'Boss-Extrude1', icon: 'boss', expandable: true, muted: true },
  { label: 'Cut-Extrude1', icon: 'cut', expandable: true, muted: true },
  { label: 'Fillet1', icon: 'fillet', muted: true },
  { label: 'Fillet2', icon: 'fillet', muted: true },
  { label: '(-) Sketch3', icon: 'sketch', muted: true },
  { label: 'LPattern2', icon: 'lpattern', muted: true, error: true },
];

const managerTabs = ['part', 'table', 'config', 'target', 'ball'];

const FeatureTree = () => (
  <aside className="relative z-10 w-[273px] shrink-0 flex flex-col bg-[#f7f7f7] border-r border-[#808080]">
    <div className="h-[5px] mr-[2px] border-t border-b border-t-[#8fb0b8] border-b-[#b8b8b8]" />
    <div className="h-5 mr-[2px] flex items-center justify-center border-b border-[#b8b8b8]">
      <span className="w-[6px] h-[6px] rounded-full bg-[#ccc] border border-[#888]" />
    </div>
    <div className="h-[30px] pt-1 mr-[2px] flex">
      {managerTabs.map((icon, i) => (
        <button
          key={icon}
          type="button"
          aria-label={icon}
          className={clsx(
            'h-[26px] shrink-0 flex items-center justify-center border-t border-r border-[#808080]',
            i === 0 ? 'w-[42px] pl-[3px]' : 'w-10 bg-[#d4d4d4] border-b'
          )}
        >
          <Icon name={icon} className="w-[19px] h-[19px]" />
        </button>
      ))}
      <button type="button" aria-label="Display manager" className="w-8 h-[26px] shrink-0 pl-[10px] flex items-center bg-[#d4d4d4] border-t border-b border-[#808080]">
        <Icon name="cam" />
      </button>
      <div className="flex flex-1 h-[26px] pt-[6px] bg-[#d4d4d4] border-t border-[#808080]">
        <button type="button" aria-label="Previous tabs" className="flex-1 flex items-center justify-center bg-[#f7f7f7] border border-[#a0a0a0]">
          <svg viewBox="0 0 4 8" className="w-1 h-2">
            <path d="M4 0V8L0 4z" />
          </svg>
        </button>
        <button type="button" aria-label="Next tabs" className="flex-1 flex items-center justify-center bg-[#f7f7f7] border border-l-0 border-[#a0a0a0]">
          <svg viewBox="0 0 4 8" className="w-1 h-2">
            <path d="M0 0V8L4 4z" />
          </svg>
        </button>
      </div>
    </div>
    <label className="h-8 mx-[5px] flex items-center pl-[2px] border border-[#c0c0c0]">
      <Icon name="funnel" className="w-[19px] h-[19px]" />
      <input type="text" aria-label="Filter tree" className="flex-1 min-w-0 px-1 bg-transparent outline-none" />
    </label>
    <ul className="mr-[2px] border-l border-[#b8b8b8] text-[14px]">
      <li className="h-6 flex items-center whitespace-nowrap text-[#c00014]">
        <Icon name="part" className="w-[19px] h-[19px] ml-[3px]" />
        <Icon name="errorDown" className="w-4 h-4 ml-[6px] mr-[5px]" />
        <span className="whitespace-pre">{'strip  (Default<<Default>_Display'}</span>
      </li>
      {treeNodes.map((node) => (
        <li key={node.label} className={clsx('h-6 flex items-center whitespace-nowrap', node.muted && 'text-[#808080]')}>
          <span className="w-[25px] shrink-0 pl-2">
            {node.expandable && (
              <button type="button" aria-label={`Expand ${node.label}`} className="block">
                <svg viewBox="0 0 5 8" className="w-[5px] h-2 fill-[#555]">
                  <path d="M0 0V8L5 4z" />
                </svg>
              </button>
            )}
          </span>
          <Icon name={node.icon} className="w-[19px] h-[19px] mr-[5px]" />
          {node.error && <Icon name="errorCross" className="w-4 h-4 ml-[2px] mr-[6px]" />}
          {node.label}
        </li>
      ))}
    </ul>
    <div className="h-1 mr-[2px] bg-[#b4b4cc] border-t border-[#d0d0e0]" />
    <div className="mt-auto h-5 mr-[2px] bg-[#f0f0f0] pl-[22px] flex items-center">
      <div className="w-48 h-[6px] bg-[#868686]" />
    </div>
    <div className="h-1 mt-px mr-[2px] border-t border-b border-[#c0c0c0]" />
    <button
      type="button"
      aria-label="Collapse panel"
      className="absolute left-[271px] top-[376px] w-[13px] h-[49px] flex items-center justify-center bg-[#f7f7f7] border border-l-0 border-[#808080]"
    >
      <span className="w-[6px] h-[6px] rounded-full bg-[#ccc] border border-[#888]" />
    </button>
  </aside>
);

// Sketch relation flags, top-left corner of each 12px square
const relations = [
  { x: 939, y: 462, kind: 'horizontal' },
  { x: 844, y: 577, kind: 'coincident' },
  { x: 858, y: 591, kind: 'vertical' },
  { x: 858, y: 605, kind: 'coincident' },
  { x: 1020, y: 591, kind: 'midpoint' },
  { x: 1048, y: 591, kind: 'vertical' },
  { x: 939, y: 605, kind: 'horizontal' },
  { x: 939, y: 748, kind: 'horizontal' },
];

const relationPaths: Record<string, string> = {
  horizontal: 'M1 5.500H11',
  vertical: 'M5.500 1V11',
  coincident: 'M0 0L5 5M12 0L7 5M1 11.500L5 7.500M11 11.500L7.500 7.500',
  midpoint: 'M0 12L5 7M7 5L12 0',
};

const SketchDrawing = () => (
  <svg className="absolute inset-0 w-full h-full" role="img" aria-label="Sketch1">
    <g transform="translate(-273 -148)">
      <rect x="850" y="454.500" width="190" height="285" fill="#d5d3a8" stroke="#000" strokeWidth="2.400" />
      <g stroke="#222" strokeWidth="1.300" fill="none">
        <path d="M850 318V450M1040 318V450M850 331H886M962 331H1040" />
        <path d="M788 454.500H845M788 739.500H845M801.500 454V610M801.500 633V739" />
      </g>
      <path d="M850 331l13-2.500v5zM1040 331l-13-2.500v5zM801.500 454.500l-2.500 13h5zM801.500 739.500l-2.500-13h5z" />
      <path d="M874 597H1036" stroke="#4d4b30" strokeWidth="2" strokeDasharray="4 4 20 4" />
      <g className="font-[Lato] text-[20px] font-bold">
        <text x="907" y="339">20.00</text>
        <text x="776" y="629">30.00</text>
      </g>
      <text x="885" y="339" fill="#ff0000" className="font-['Liberation_Serif'] text-[23px] font-bold">
        Σ
      </text>
      <circle cx="850" cy="454.500" r="2.800" />
      <circle cx="1040" cy="454.500" r="2.800" />
      <circle cx="850" cy="739.500" r="2.800" />
      <circle cx="1040" cy="739.500" r="2.800" />
      <circle cx="1040" cy="597.500" r="2.800" />
      <path d="M845 593L854 602M854 593L845 602M844 597.500H854" stroke="#000" />
      <path d="M849.500 568V597.500H858" stroke="#f00" strokeWidth="2" fill="none" />
      <path d="M849.500 557l-3.500 11h7z" fill="#f00" />
      {relations.map((r) => (
        <g key={`${r.x}-${r.y}`} transform={`translate(${r.x} ${r.y})`}>
          <rect width="12" height="12" fill="#00cc33" />
          <path d={relationPaths[r.kind]} stroke="#000" fill="none" />
          {(r.kind === 'coincident' || r.kind === 'midpoint') && <circle cx="6" cy="6.500" r="1.700" fill="#fff" stroke="#222" />}
        </g>
      ))}
    </g>
  </svg>
);

const Triad = () => (
  <svg viewBox="0 0 60 60" className="absolute left-[40px] bottom-[60px] w-[60px] h-[60px]" role="img" aria-label="Orientation triad">
    <rect x="7.500" y="24" width="5" height="22" fill="#7fc07f" stroke="#155a15" strokeWidth="1.200" />
    <path d="M10 14L4.500 26H15.500z" fill="#147014" />
    <rect x="14" y="49.500" width="21" height="5" fill="#e88080" stroke="#8a1010" strokeWidth="1.200" />
    <path d="M47 52L36 46.500V57.500z" fill="#c81414" />
    <circle cx="10" cy="52" r="6" fill="#101080" />
    <path d="M7 46H13L8 55H12" fill="none" stroke="#1818ff" />
    <text x="6" y="11" fill="#008000" className="font-['Liberation_Sans'] text-[13px]">
      Y
    </text>
    <text x="47" y="56" fill="#e01010" className="font-['Liberation_Sans'] text-[13px]">
      X
    </text>
  </svg>
);

const taskPaneTabs = ['home', 'library', 'explorer', 'palette', 'ball', 'table', 'forum'];

const Viewport = () => (
  <main className="relative flex-1 bg-white">
    <SketchDrawing />
    <svg viewBox="0 0 70 60" className="absolute right-[39px] top-[5px] w-[70px] h-[60px]" aria-hidden="true">
      <path d="M21 2H2V16Q2 26 12 26H22" fill="none" stroke="#d6e6ee" strokeWidth="2" />
      <path d="M44 17Q43 31 32 30V36L23 27L32 17V23Q39 24 44 17z" fill="#dcebf2" stroke="#c0d4de" strokeWidth="1.500" />
      <path d="M49 36L65 52M65 36L49 52" stroke="#e8c4c4" strokeWidth="9" strokeLinecap="round" />
      <path d="M49 36L65 52M65 36L49 52" stroke="#f6d3d0" strokeWidth="6" strokeLinecap="round" />
    </svg>
    <Triad />
    <span className="absolute left-[11px] bottom-0 font-[Lato] text-[17px] font-bold leading-[22px] text-[#222]">*Front</span>
    <div className="absolute right-0 top-[55px] w-8 border-l border-t border-[#808080]">
      {taskPaneTabs.map((icon, i) => (
        <button
          key={icon}
          type="button"
          aria-label={icon}
          className={clsx('w-full h-[30px] flex items-center justify-center border-b border-[#808080]', i === 0 ? 'bg-[#f7f7f7]' : 'bg-[#d4d4d4]')}
        >
          <Icon name={icon} className="w-[19px] h-[19px]" />
        </button>
      ))}
    </div>
  </main>
);

const navPaths = ['M13 4V14L7 9zM5 4V14', 'M12 4V14L6 9z', 'M7 4V14L13 9z', 'M5 4V14L11 9zM13 4V14'];

const BottomTabs = () => (
  <div className="h-[21px] shrink-0 flex bg-[#f7f7f7] border-t border-b border-[#808080] text-[15px] leading-[19px]">
    <div className="w-[27px] shrink-0 border-l-2 border-[#8fb0b8]" />
    {navPaths.map((d) => (
      <button key={d} type="button" aria-label="Scroll tabs" className="w-5 shrink-0 bg-[#a9abc2] border border-[#85869a]">
        <svg viewBox="0 0 18 18" className="w-full h-full fill-[#7d7f98] stroke-[#7d7f98]">
          <path d={d} />
        </svg>
      </button>
    ))}
    <button type="button" className="w-[77px] pl-1 border-r border-[#808080] font-bold">
      Model
    </button>
    <button type="button" className="w-[89px] border-r border-[#808080] bg-[#d4d4d4]">
      3D Views
    </button>
    <button type="button" className="w-[144px] pl-[13px] border-r border-[#808080] bg-[#d4d4d4] text-left">
      Motion Study 1
    </button>
  </div>
);

const StatusBar = () => (
  <footer className="h-[21px] shrink-0 flex items-center pt-[2px] bg-[#e6e6e6] text-[14px] whitespace-nowrap">
    <span className="pl-px">SOLIDWORKS Premium 2020 SP0.0</span>
    <div className="ml-auto flex items-center">
      <span className="w-[90px] text-right">-59.43mm</span>
      <span className="w-[92px] text-right">25.99mm</span>
      <span className="w-[62px] text-right">0.00mm</span>
      <span className="w-[130px] pl-[22px]">Fully Defined</span>
      <Icon name="rebuild" className="w-[19px] h-[19px] ml-[21px]" />
      <span className="ml-[74px]">MMGS</span>
      <button type="button" aria-label="Unit system" className="w-[42px] flex justify-center">
        <svg viewBox="0 0 6 4" className="w-[6px] h-1 fill-[#333]">
          <path d="M0 4H6L3 0z" />
        </svg>
      </button>
      <Icon name="tag" className="w-[19px] h-[19px] ml-[10px]" />
    </div>
  </footer>
);

const App: React.FC = () => (
  <div className="h-screen flex flex-col overflow-hidden bg-white font-['Open_Sans',sans-serif] text-[13px] text-black">
    <TitleBar />
    <Ribbon />
    <CommandTabs />
    <div className="flex-1 min-h-0 flex">
      <FeatureTree />
      <Viewport />
    </div>
    <BottomTabs />
    <StatusBar />
    <div className="h-[6px] shrink-0 bg-linear-to-r from-[#14263c] to-[#1c2b33]" />
  </div>
);

export default App;
